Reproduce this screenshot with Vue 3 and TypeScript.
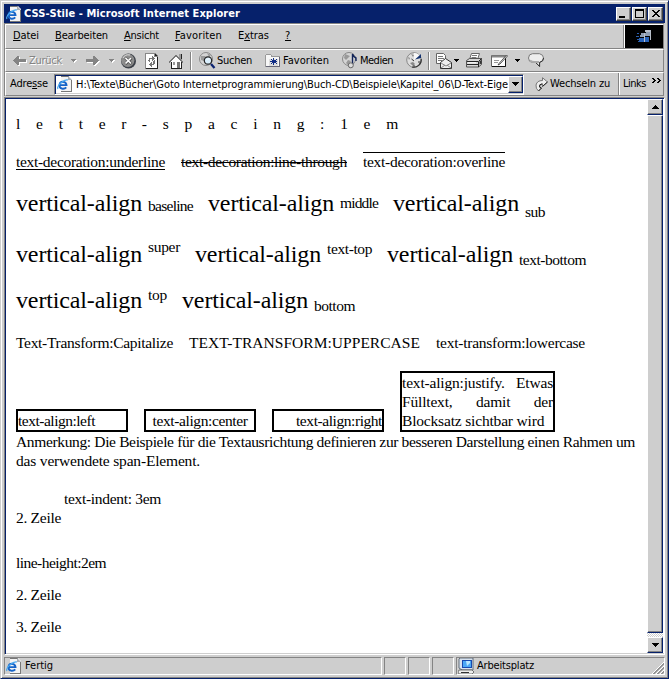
<script setup lang="ts">
import type { Directive } from 'vue'

// Spreads or tightens the letters of a label so that it fills a given width.
const vFit: Directive<HTMLElement, number> = {
  mounted(el, binding) {
    const natural = el.getBoundingClientRect().width
    const count = (el.textContent ?? '').trim().length
    el.style.letterSpacing = `${(binding.value - natural) / count}px`
  },
}

interface MenuEntry { pre: string; key: string; post: string; width: number }
const menu: MenuEntry[] = [
  { pre: '', key: 'D', post: 'atei', width: 26 },
  { pre: '', key: 'B', post: 'earbeiten', width: 53 },
  { pre: '', key: 'A', post: 'nsicht', width: 35 },
  { pre: '', key: 'F', post: 'avoriten', width: 47 },
  { pre: 'E', key: 'x', post: 'tras', width: 31 },
  { pre: '', key: '?', post: '', width: 6 },
]

interface Align { name: string; width: number }
const alignRows: Align[][] = [
  [{ name: 'baseline', width: 45 }, { name: 'middle', width: 38 }, { name: 'sub', width: 20 }],
  [{ name: 'super', width: 32 }, { name: 'text-top', width: 45 }, { name: 'text-bottom', width: 67 }],
  [{ name: 'top', width: 19 }, { name: 'bottom', width: 41 }],
]
</script>

<template>
  <div class="window">
    <svg class="defs" width="0" height="0" aria-hidden="true">
      <symbol id="page" viewBox="0 0 16 16">
        <path d="M4 0h8l3 3v13H4z" fill="#f4f4f4" />
        <path d="M4 0h8v1H4zM14 4h1v12H4v-1h10z" fill="#777" />
        <path d="M11 0v4h4z" fill="#a8adb4" />
        <path d="M2.200 9.100h7.300C9.300 5 3 4.500 2.500 9c-.3 4 4.500 4.800 6.800 2.300" fill="none" stroke="#1664c8" stroke-width="1.900" />
        <path d="M1 13C-1 10 7 3 11 4" fill="none" stroke="#48a8f0" stroke-width="1.200" />
      </symbol>
      <symbol id="arrow" viewBox="0 0 13 9">
        <path d="M0 4h1V3h1V2h1V1h1V0h2v3h7v3H6v3H4V8H3V7H2V6H1V5H0z" />
      </symbol>
    </svg>

    <header class="title">
      <svg class="tico smooth"><use href="#page" /></svg>
      <span v-fit="216" class="tname">CSS-Stile - Microsoft Internet Explorer</span>
      <div class="wbtns">
        <i class="btn"><svg width="9" height="9"><path d="M0 7h6v2H0z" /></svg></i>
        <i class="btn"><svg width="9" height="9"><path d="M0 0h9v9H0zM1 2v6h7V2z" fill-rule="evenodd" /></svg></i>
        <i class="btn close"><svg width="8" height="7"><path d="M0 0h2v1h1v1h2V1h1V0h2v1H7v1H6v1H5v1h1v1h1v1h1v1H6V6H5V5H3v1H2v1H0V6h1V5h1V4h1V3H2V2H1V1H0z" /></svg></i>
      </div>
    </header>

    <div class="rebar">
      <nav class="row menu">
        <span v-for="m in menu" :key="m.key" v-fit="m.width">{{ m.pre }}<u>{{ m.key }}</u>{{ m.post }}</span>
        <div class="throbber">
          <svg width="17" height="14" viewBox="0 0 17 14">
            <path d="M5 3h4v4H4zM10 1h4v5H9z" fill="#8e9cb0" /><path d="M3 8h5v4H3zM9 7h4v5H8z" fill="#2862b8" />
            <path d="M1 3h2v1H1zM0 6h3v1H0zM1 9h2v1H1zM2 11h1v1H2z" fill="#2a5dab" /><path d="M9 0h6v10h-1V2H9zM8 3h1v9H8z" fill="#b9bfc9" />
          </svg>
        </div>
      </nav>

      <div class="row tools">
        <svg class="t-back" width="14" height="10"><use href="#arrow" x="1" y="1" width="13" height="9" fill="#fff" /><use href="#arrow" width="13" height="9" fill="#848484" /></svg>
        <span v-fit="33" class="off">Zurück</span>
        <svg class="t-c1" width="6" height="4"><path d="M1 1h5L3.500 4z" fill="#fff" /><path d="M0 0h5v1H4v1H3v1H2V2H1V1H0z" fill="#848484" /></svg>
        <svg class="t-fwd" width="14" height="10"><g transform="translate(13 0) scale(-1 1)"><use href="#arrow" x="-1" y="1" width="13" height="9" fill="#fff" /><use href="#arrow" width="13" height="9" fill="#848484" /></g></svg>
        <svg class="t-c2" width="6" height="4"><path d="M1 1h5L3.500 4z" fill="#fff" /><path d="M0 0h5v1H4v1H3v1H2V2H1V1H0z" fill="#848484" /></svg>
        <svg class="t-stop smooth" width="17" height="16"><circle cx="8.500" cy="8" r="7.500" fill="#3c4048" /><circle cx="7.800" cy="7.300" r="6.600" fill="#8d8d8d" /><path d="M3 5q2-4 7-3" stroke="#ddd" fill="none" /><path d="M5.500 5l6 6m0-6l-6 6" stroke="#555" stroke-width="3" /><path d="M5.500 5l5.500 5.500m0-5.500l-5.500 5.500" stroke="#fff" stroke-width="1.600" /></svg>
        <svg class="t-ref" width="14" height="16"><path d="M0 0h10l3 3v13H0z" fill="#888" /><path d="M1 1h8v3h3v11H1z" fill="#fff" /><path d="M10 1v2h2zM13 4v12H1v-1h11V4z" fill="#222" /><path d="M3 7h1V5h3V3h1v1h1v1h1v1H9v1H8v1H7V6H5v3H4V8H3zM10 7v4H9v1H7v2H6v-1H5v-1H4v-1h1v-1h1V9h1v2h1V8h1V7z" fill="#777" /></svg>
        <svg class="t-home" width="15" height="16"><path d="M10 1h3v6h-3z" fill="#999" /><path d="M12 1h1v5h-1z" fill="#222" /><path d="M7 2L1 8v1h1v6h10V8z" fill="#fff" /><path d="M6 2h2v1h1v1h1v1h1v1h1v1h1v1h1v2h-1V9h-1V8h-1V7h-1V6H9V5H8V4H6v1H5v1H4v1H3v1H2v1H1v1H0V8h1V7h1V6h1V5h1V4h1V3h1z" fill="#777" /><path d="M2 9h1v6h9V9h1v7H2z" fill="#222" /><path d="M4 9h2v3H4z" fill="#9a9a9a" /><path d="M8 9h3v6H8z" fill="#777" /></svg>
        <i class="sep s1" />
        <svg class="t-find smooth" width="17" height="17"><circle cx="7" cy="7" r="6.500" fill="#d4d4d4" stroke="#888" /><path d="M2 4h4l2 2-3 3-3-1zM8 1l4 2-2 2zM5 10l3 1-1 2z" fill="#9a9a9a" /><circle cx="9" cy="8.500" r="3.700" fill="#d9eefc" stroke="#222" stroke-width="1.200" /><path d="M12 12l3.500 4" stroke="#0a2270" stroke-width="2.300" /><path d="M7.500 8q1-2 3-1" fill="none" stroke="#fff" /></svg>
        <span v-fit="35" class="l-find">Suchen</span>
        <svg class="t-fav" width="16" height="14"><path d="M0 1h1V0h5v1h1v1h8v11H0z" fill="#999" /><path d="M1 1h5v2h8v9H1z" fill="#f7f7f7" /><path d="M14 3h1v10H1v-1h13z" fill="#667" /><path d="M4 5h9v7H4z" fill="#ddd" /><path d="M8 4h1v2h2V5h1v1h-1v1h1v1h-1v1h1v1h-1v-1H9v2H8V9H7v1H6V9h1V8H5V7h2V6H6V5h1v1h1z" fill="#102c85" /></svg>
        <span v-fit="46" class="l-fav">Favoriten</span>
        <svg class="t-med smooth" width="16" height="17"><circle cx="7" cy="7" r="6.500" fill="#d4d4d4" stroke="#888" /><path d="M3 2l5 2-4 4-2-2zM6 8l3 1-3 4-2-2z" fill="#999" /><path d="M10.500 13V2q1 3 3.500 4v3" fill="none" stroke="#12245a" stroke-width="1.400" /><circle cx="8.800" cy="13.300" r="2.500" fill="#ddd" stroke="#666" /></svg>
        <span v-fit="33" class="l-med">Medien</span>
        <svg class="t-hist smooth" width="17" height="17"><circle cx="8" cy="8" r="7.300" fill="#dedede" stroke="#888" /><path d="M15.200 7A7.500 7.500 0 0 1 6 15" fill="none" stroke="#333" stroke-width="1.200" /><path d="M2 5l2 1-1 2zM4 11l3-1 2 2-2 2zM5 2l3 1-1 2z" fill="#888" /><path d="M8 8V1a7 7 0 0 1 6 3z" fill="#f8f8f8" /><path d="M9 7.500L15 2v4z" fill="#12316f" /><path d="M8 9L5.500 7M12 10h2M8 13v2" stroke="#333" /></svg>
        <i class="sep s2" />
        <svg class="t-mail smooth" width="17" height="16"><path d="M.5.5h7l2 2v8h-9z" fill="#fff" stroke="#666" /><path d="M2 3.500h5M2 5.500h6M2 7.500h4" stroke="#777" /><path d="M4.500 9.500l5-4 6 4v6h-11z" fill="#eee" stroke="#333" /><path d="M5 10l5 3 5-3M5 15l4-3M15 15l-4-3" fill="none" stroke="#888" /></svg>
        <svg class="t-c3" width="5" height="3"><path d="M0 0h5v1H4v1H3v1H2V2H1V1H0z" /></svg>
        <svg class="t-print smooth" width="17" height="15"><path d="M5.500.5h8l-2 6h-8z" fill="#fff" stroke="#666" /><path d="M6 2.500h5M5.500 4.500h5" stroke="#777" /><path d="M.5 7.500l3-2h12v6l-3 2.500H.5z" fill="#d6d6d6" stroke="#555" /><path d="M1 8.500h11.500l3-3M12.500 9v5M1 11.500h11" fill="none" stroke="#222" /><path d="M2 9.800h8" stroke="#fff" /><path d="M13.500 11.500v-3l2-2v4z" fill="#333" /></svg>
        <svg class="t-edit smooth" width="17" height="14"><path d="M.5 1.500h14v11H.5z" fill="#fff" stroke="#666" /><path d="M1 2.500h13" stroke="#888" stroke-width="2" /><path d="M3 6.500h5M3 8.500h4" stroke="#999" /><path d="M14.500 2v10.500H1" stroke="#111" fill="none" /><path d="M15.500 1L8 9.500 7 11l2-1 7.500-8z" fill="#eee" stroke="#333" stroke-width=".8" /></svg>
        <svg class="t-c4" width="5" height="3"><path d="M0 0h5v1H4v1H3v1H2V2H1V1H0z" /></svg>
        <svg class="t-talk smooth" width="17" height="15"><path d="M4.500.7h7q4 1 4 4.300t-4 4.300v4L7.500 9.500h-3Q.5 9 .5 5t4-4.300z" fill="#eee" stroke="#777" /><path d="M15.600 5q0 3.500-4 4.500v4L8 9.800" fill="none" stroke="#333" /><path d="M2 7.500q2 2 6 1.500h3" stroke="#aaa" fill="none" stroke-width="2" /></svg>
      </div>

      <div class="row address">
        <span v-fit="38" class="l-adr">Adre<u>s</u>se</span>
        <div class="field">
          <svg class="fico smooth"><use href="#page" /></svg>
          <div class="url"><span v-fit="432">H:\Texte\Bücher\Goto Internetprogrammierung\Buch-CD\Beispiele\Kapitel_06\D-Text-Eige</span></div>
          <i class="btn drop"><svg width="7" height="4"><path d="M0 0h7v1H6v1H5v1H4v1H3V3H2V2H1V1H0z" /></svg></i>
        </div>
        <svg class="t-go smooth" width="13" height="15"><path d="M7.500.7l5 4.300-5 4.300V6.700Q4 7 4.500 10l2 1-3 3Q.5 11.500 1 8q1-4.500 6.500-4.500z" fill="#eee" stroke="#777" /><path d="M7.500 9.500L12.500 5M7 7Q4 7 4.500 10l2 1-3 3" fill="none" stroke="#222" /></svg>
        <span v-fit="60" class="l-go">Wechseln zu</span>
        <i class="sep s3" />
        <span v-fit="23" class="l-links">Links</span>
        <svg class="t-more" width="9" height="5"><path d="M0 0h2v1h1v1h1v1H3v1H2v1H0V4h1V3h1V2H1V1H0zM5 0h2v1h1v1h1v1H8v1H7v1H5V4h1V3h1V2H6V1H5z" /></svg>
      </div>
    </div>

    <main class="view">
      <article class="doc">
        <p class="line spaced"><span v-fit="398">letter-spacing:1em</span></p>
        <p class="line deco">
          <span v-fit="149" class="under">text-decoration:underline</span>
          <span v-fit="166" class="through">text-decoration:line-through</span>
          <span v-fit="142" class="over">text-decoration:overline</span>
        </p>
        <p v-for="(row, i) in alignRows" :key="i" class="big" :class="`big-${i}`">
          <span v-for="a in row" :key="a.name" class="pair"><span v-fit="126" class="va">vertical-align</span><span v-fit="a.width" class="small" :class="a.name">{{ a.name }}</span></span>
        </p>
        <p class="line transform">
          <span v-fit="157" class="cap">Text-Transform:Capitalize</span>
          <span v-fit="231">TEXT-TRANSFORM:UPPERCASE</span>
          <span v-fit="149">text-transform:lowercase</span>
        </p>
        <div class="boxes">
          <div class="box"><span v-fit="77">text-align:left</span></div>
          <div class="box center"><span v-fit="95">text-align:center</span></div>
          <div class="box right"><span v-fit="86">text-align:right</span></div>
          <div class="box just">text-align:justify. Etwas Fülltext, damit der Blocksatz sichtbar wird</div>
        </div>
        <p class="line"><span v-fit="619">Anmerkung: Die Beispiele für die Textausrichtung definieren zur besseren Darstellung einen Rahmen um</span></p>
        <p class="line"><span v-fit="184">das verwendete span-Element.</span></p>
        <p class="line indent"><span v-fit="97">text-indent: 3em</span></p>
        <p class="line"><span v-fit="45">2. Zeile</span></p>
        <div class="tall">
          <p><span v-fit="90">line-height:2em</span></p>
          <p><span v-fit="45">2. Zeile</span></p>
          <p><span v-fit="45">3. Zeile</span></p>
        </div>
      </article>
      <aside class="scroll">
        <i class="btn sb"><svg width="7" height="4"><path d="M3 0h1v1h1v1h1v1h1v1H0V3h1V2h1V1h1z" /></svg></i>
        <i class="btn thumb" />
        <i class="track" />
        <i class="btn sb"><svg width="7" height="4"><path d="M0 0h7v1H6v1H5v1H4v1H3V3H2V2H1V1H0z" /></svg></i>
      </aside>
    </main>

    <footer class="status">
      <div class="pane main"><svg class="sico smooth"><use href="#page" /></svg><span v-fit="28">Fertig</span></div>
      <div class="pane cell" /><div class="pane cell" /><div class="pane cell" />
      <div class="pane zone">
        <svg class="smooth" width="17" height="16"><path d="M2 0h13v12H4L1 10V1z" fill="#d8e2ee" stroke="#345" stroke-width=".7" /><path d="M4 2h10v8H4z" fill="#174ab0" /><path d="M5 3h8v6H5z" fill="#4ba8f6" /><path d="M8 3h4v2L9 8z" fill="#b9e7ff" /><path d="M1 12h13l2 2-2 2H1l-1-2z" fill="#eee" stroke="#444" stroke-width=".7" /><path d="M3 14h8v1H3z" fill="#333" /></svg>
        <span v-fit="57">Arbeitsplatz</span>
        <svg class="grip" width="13" height="13"><path d="M1 13L13 1M5 13l8-8M9 13l4-4" stroke="#fff" /><path d="M2 13L13 2M3 13L13 3M6 13l7-7M7 13l6-6M10 13l3-3M11 13l2-2" stroke="#848484" stroke-width=".8" /></svg>
      </div>
    </footer>
  </div>
</template>

<style>
body { margin: 0; overflow: hidden; }
</style>

<style scoped>
.window {
  box-sizing: border-box; width: 669px; height: 679px; display: flex; flex-direction: column;
  background: #cecece; padding: 3px 3px 2px 3px; color: #000;
  border-style: solid; border-width: 1px; border-color: #cecece #06216b #06216b #cecece;
  box-shadow: inset 1px 1px #fff, inset -1px -1px #848484;
  font: 11px/14px "DejaVu Sans Condensed", "DejaVu Sans", sans-serif;
}
.defs { position: absolute; }
svg { display: block; flex: none; shape-rendering: crispEdges; }
.smooth { shape-rendering: auto; }
span { white-space: nowrap; flex: none; }
i { display: block; flex: none; box-sizing: border-box; }
u { text-decoration: underline; text-decoration-thickness: 1px; text-underline-offset: 1px; }

.title { height: 19px; flex: none; width: 661px; background: #06216b; color: #fff; display: flex; align-items: center; font-weight: bold; }
.tico { width: 16px; height: 16px; margin-left: 2px; }
.tname { margin-left: 2px; }
.wbtns { display: flex; margin-left: auto; margin-right: 2px; }
.btn {
  width: 15px; height: 14px; background: #cecece; display: flex; align-items: center; justify-content: center;
  border: 1px solid; border-color: #fff #404040 #404040 #fff; box-shadow: inset -1px -1px #848484;
}
.wbtns .btn + .btn { margin-left: 1px; }
.wbtns .close { margin-left: 3px; }

.rebar { width: 660px; flex: none; border-top: 1px solid #848484; border-left: 1px solid #848484; box-sizing: border-box; }
.row { display: flex; align-items: center; box-sizing: border-box; border-top: 1px solid #fff; border-left: 1px solid #fff; border-bottom: 1px solid #848484; border-right: 1px solid #848484; }
.menu { height: 25px; padding: 0 0 0 7px; gap: 16px; }
.menu > span { margin-top: -2px; }
.throbber { margin-left: auto; width: 38px; height: 23px; background: #000; display: flex; align-items: center; justify-content: center; box-shadow: -1px 0 #fff, -2px 0 #848484; }
.tools { height: 23px; padding-left: 7px; }
.off { color: #848484; text-shadow: 1px 1px #fff; margin-left: 2px; }
.t-c1 { margin-left: 9px; }
.t-fwd { margin-left: 9px; }
.t-c2 { margin-left: 9px; }
.t-stop { margin-left: 5px; }
.t-ref { margin-left: 8px; }
.t-home { margin-left: 10px; }
.sep { width: 2px; height: 18px; border-left: 1px solid #848484; border-right: 1px solid #fff; }
.s1 { margin-left: 6px; }
.t-find { margin-left: 7px; }
.l-find { margin-left: 1px; }
.t-fav { margin-left: 13px; }
.l-fav { margin-left: 2px; }
.t-med { margin-left: 13px; }
.l-med { margin-left: 2px; }
.t-hist { margin-left: 13px; }
.s2 { margin-left: 5px; }
.t-mail { margin-left: 6px; }
.t-c3 { margin-left: 1px; }
.t-print { margin-left: 7px; }
.t-edit { margin-left: 8px; }
.t-c4 { margin-left: 7px; }
.t-talk { margin-left: 8px; }

.address { height: 24px; padding-left: 4px; }
.field { box-sizing: border-box; width: 470px; height: 21px; margin-left: 6px; background: #fff; display: flex; align-items: center; border: 1px solid; border-color: #848484 #fff #fff #848484; box-shadow: inset 1px 1px #06216b, inset -1px -1px #cecece; }
.fico { width: 16px; height: 16px; margin-left: 2px; }
.url { width: 432px; margin-left: 3px; overflow: hidden; padding-top: 1px; }
.drop { height: 17px; border-right-color: #06216b; border-bottom-color: #06216b; }
.t-go { margin-left: 11px; }
.l-go { margin-left: 2px; }
.s3 { margin-left: 8px; height: 22px; }
.l-links { margin-left: 3px; }
.t-more { margin: 0 0 8px 6px; }

.view { display: flex; width: 661px; height: 558px; flex: none; box-sizing: border-box; margin-top: 1px; border: 1px solid; border-color: #848484 #fff #fff #848484; box-shadow: inset 1px 1px #06216b, inset 0 -1px #cecece; background: #fff; }
.doc { flex: 1; padding: 16px 0 0 11px; font: 15.500px/19px "Liberation Serif", serif; min-width: 0; }
p { margin: 0; }
.line { height: 19px; white-space: nowrap; }
.deco, .transform { display: flex; gap: 16px; }
.deco { margin-top: 19px; }
.under { text-decoration: underline 1px; text-underline-offset: 2px; text-decoration-skip-ink: none; }
.through { text-decoration: line-through 1px; }
.over { box-sizing: border-box; height: 19px; line-height: 17px; border-top: 1px solid #000; }
.big { display: flex; height: 27px; line-height: 27px; font-size: 24px; gap: 15px; }
.big-0 { margin-top: 19px; }
.big-1 { margin-top: 24px; }
.big-2 { margin-top: 19px; }
.pair { display: block; }
.va { margin-right: 6px; }
.small { font-size: 15.500px; line-height: 0; }
.middle { vertical-align: 3px; }
.sub { vertical-align: -6px; }
.super { vertical-align: 10px; }
.text-top { vertical-align: 8px; }
.text-bottom { vertical-align: -3px; }
.top { vertical-align: 8px; }
.bottom { vertical-align: -3px; }
.transform { margin-top: 19px; }
.boxes { display: flex; align-items: flex-end; gap: 16px; margin-top: 19px; }
.box { box-sizing: border-box; width: 112px; height: 23px; border: 2px solid #000; }
.center { text-align: center; }
.right { text-align: right; }
.just { width: 155px; height: 61px; text-align: justify; letter-spacing: -0.180px; }
.indent { margin-top: 19px; padding-left: 48px; }
.tall { margin-top: 20px; line-height: 32px; }

.scroll { width: 17px; margin: 1px 0 1px; display: flex; flex-direction: column; background: #cecece; box-sizing: border-box; border-right: 1px solid #fff; }
.scroll .btn { width: 16px; border-right-color: #06216b; border-bottom-color: #06216b; }
.sb { height: 16px; }
.thumb { flex: 1; }
.track { height: 4px; background: repeating-conic-gradient(#fff 0 25%, #cecece 0 50%) 0 0 / 2px 2px; }

.status { display: flex; gap: 2px; width: 661px; height: 18px; margin-top: 2px; flex: none; }
.pane { box-sizing: border-box; height: 18px; border: 1px solid; border-color: #848484 #fff #fff #848484; display: flex; align-items: center; }
.main { width: 378px; }
.sico { width: 16px; height: 16px; margin: 0 3px 0 1px; }
.cell { width: 22px; }
.zone { flex: 1; padding-left: 1px; }
.zone span { margin-left: 2px; }
.grip { margin-left: auto; margin-top: 3px; }
</style>
